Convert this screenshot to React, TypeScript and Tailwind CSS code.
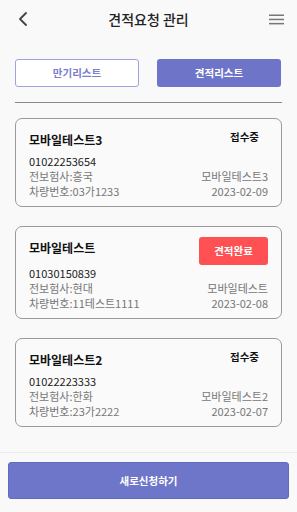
import React from "react";

interface Quote {
  name: string;
  phone: string;
  insurer: string;
  carNo: string;
  agent: string;
  date: string;
  done: boolean;
}

const quotes: Quote[] = [
  { name: "모바일테스트3", phone: "01022253654", insurer: "흥국", carNo: "03가1233", agent: "모바일테스트3", date: "2023-02-09", done: false },
  { name: "모바일테스트", phone: "01030150839", insurer: "현대", carNo: "11테스트1111", agent: "모바일테스트", date: "2023-02-08", done: true },
  { name: "모바일테스트2", phone: "01022223333", insurer: "한화", carNo: "23가2222", agent: "모바일테스트2", date: "2023-02-07", done: false },
];

const font = { fontFamily: '"Noto Sans CJK KR", "Noto Sans", sans-serif' };

function QuoteCard({ q }: { q: Quote }) {
  return (
    <div className="rounded-[7px] border border-[#9a9a9a] bg-[#fafafa] pl-[13px] pr-[13px] pt-[10px] pb-[7px]">
      {/* 이름 + 상태 */}
      <div className="flex min-h-[24px] items-start justify-between">
        <div className="mt-[2px] text-[12px] font-bold leading-[18px] text-[#111]">{q.name}</div>
        {q.done ? (
          <div className="flex h-[28px] w-[69px] items-center justify-center rounded-[3px] bg-[#ff5053] text-[10.5px] font-bold text-white">
            견적완료
          </div>
        ) : (
          <div className="mr-[9px] text-[10.5px] font-bold leading-[16px] text-[#111]">접수중</div>
        )}
      </div>
      <div className="mt-px text-[11px] leading-[15px] text-[#222]">{q.phone}</div>
      <div className="flex justify-between text-[11px] leading-[15px] text-[#777]">
        <span>전보험사:{q.insurer}</span>
        <span>{q.agent}</span>
      </div>
      <div className="flex justify-between text-[11px] leading-[15px] text-[#777]">
        <span>차량번호:{q.carNo}</span>
        <span>{q.date}</span>
      </div>
    </div>
  );
}

export default function App() {
  return (
    <div className="flex h-[512px] w-full flex-col bg-[#f9f9f9]" style={font}>
      <div className="flex-1">
        {/* 헤더 */}
        <div className="relative flex h-[38px] items-center justify-between pl-[18px] pr-[13px]">
          <svg width="10" height="14" viewBox="0 0 10 14" fill="none">
            <path d="M8 1L2 7l6 6" stroke="#444" strokeWidth="1.8" strokeLinecap="round" strokeLinejoin="round" />
          </svg>
          <div className="absolute left-0 right-0 text-center text-[14px] font-medium text-[#222]">견적요청 관리</div>
          <svg width="15" height="11" viewBox="0 0 15 11">
            <rect x="0" y="0.5" width="15" height="1.5" fill="#777" />
            <rect x="0" y="4.7" width="15" height="1.5" fill="#777" />
            <rect x="0" y="8.9" width="15" height="1.5" fill="#777" />
          </svg>
        </div>

        {/* 탭 */}
        <div className="mt-[21px] flex gap-[18px] px-[15px]">
          <button className="h-[28px] w-[124px] rounded-[3px] border border-[#9da2e0] bg-white text-[10.5px] font-bold text-[#7a80cf]">
            만기리스트
          </button>
          <button className="h-[28px] w-[124px] rounded-[3px] bg-[#6e75c9] text-[10.5px] font-bold text-white">
            견적리스트
          </button>
        </div>
        <div className="mx-[15px] mt-[15px] h-px bg-[#8a8a8a]" />

        {/* 목록 */}
        <div className="mt-[15px] flex flex-col gap-[19px] px-[15px]">
          {quotes.map((q) => (
            <QuoteCard key={q.name} q={q} />
          ))}
        </div>
      </div>

      {/* 하단 버튼 */}
      <div className="h-[60px] border-t border-[#ececec] px-[8px] pt-[9px]">
        <button className="h-[37px] w-full rounded-[3px] border border-[#6269c2] bg-[#6e76c9] text-[10.5px] font-bold text-white">
          새로신청하기
        </button>
      </div>
    </div>
  );
}
